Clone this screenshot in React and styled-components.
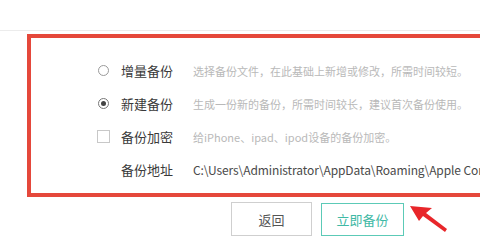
import React from "react";
import styled, { createGlobalStyle } from "styled-components";

const Global = createGlobalStyle`
  html, body { margin: 0; padding: 0; background: #fff; }
  body {
    width: 480px; height: 252px; overflow: hidden;
    font-family: "Noto Sans CJK SC", "Noto Sans", sans-serif;
  }
`;

const Page = styled.div`
  width: 480px;
  height: 252px;
  overflow: hidden;
  display: flex;
  flex-direction: column;
`;

const TopBar = styled.div`
  height: 30px;
  flex: none;
  border-bottom: 1px solid #ececec;
`;

const Highlight = styled.section`
  margin: 3px 0 0 27px;
  width: 480px;
  height: 139px;
  flex: none;
  border: 4px solid #e5483b;
  border-right: none;
  padding-top: 16px;
  box-sizing: content-box;
  overflow: hidden;
`;

const Grid = styled.div`
  display: grid;
  grid-template-columns: 13px 52px auto;
  grid-auto-rows: 33px;
  column-gap: 11px;
  padding-left: 66px;
  align-items: center;
`;

const Control = styled.div`
  display: flex;
  align-items: center;
  justify-content: center;
  height: 33px;
`;

const Radio = styled.span`
  width: 11px;
  height: 11px;
  box-sizing: border-box;
  border-radius: 50%;
  border: 1px solid ${(p) => (p.$checked ? "#777" : "#9a9a9a")};
  display: flex;
  align-items: center;
  justify-content: center;
  &::after {
    content: "";
    display: ${(p) => (p.$checked ? "block" : "none")};
    width: 5px;
    height: 5px;
    border-radius: 50%;
    background: #444;
  }
`;

const Check = styled.span`
  width: 13px;
  height: 13px;
  box-sizing: border-box;
  border: 1px solid #c8c8c8;
`;

const Label = styled.div`
  font-size: 13px;
  color: #3a3a3a;
  white-space: nowrap;
`;

const Desc = styled.div`
  margin-left: 9px;
  font-size: 11px;
  color: #b9b9b9;
  white-space: nowrap;
`;

const Path = styled.div`
  margin-left: 9px;
  font-size: 12px;
  color: #4a4a4a;
  white-space: nowrap;
  letter-spacing: -0.1px;
`;

const Actions = styled.div`
  display: flex;
  align-items: flex-start;
  gap: 9px;
  padding: 5px 0 0 231px;
  position: relative;
`;

const Button = styled.button`
  width: ${(p) => (p.$primary ? "83px" : "81px")};
  height: ${(p) => (p.$primary ? "33px" : "34px")};
  margin-top: ${(p) => (p.$primary ? "1px" : "0")};
  box-sizing: border-box;
  background: #fff;
  border: 1px solid ${(p) => (p.$primary ? "#5ccab7" : "#cfcfcf")};
  color: ${(p) => (p.$primary ? "#3fb9a5" : "#555")};
  font-family: "Noto Sans CJK SC", sans-serif;
  font-size: 13px;
  padding: 0;
`;

const Arrow = styled.svg`
  position: absolute;
  left: 405px;
  top: 7px;
`;

const rows = [
  { control: "radio", label: "增量备份", desc: "选择备份文件，在此基础上新增或修改，所需时间较短。" },
  { control: "radio", checked: true, label: "新建备份", desc: "生成一份新的备份，所需时间较长，建议首次备份使用。" },
  { control: "check", label: "备份加密", desc: "给iPhone、ipad、ipod设备的备份加密。" },
  { control: null, label: "备份地址", path: "C:\\Users\\Administrator\\AppData\\Roaming\\Apple Computer\\MobileSync" },
];

export default function App() {
  return (
    <Page>
      <Global />
      <TopBar />
      <Highlight>
        <Grid>
          {rows.map((r) => (
            <React.Fragment key={r.label}>
              <Control>
                {r.control === "radio" && <Radio $checked={r.checked} />}
                {r.control === "check" && <Check />}
              </Control>
              <Label>{r.label}</Label>
              {r.path ? <Path>{r.path}</Path> : <Desc>{r.desc}</Desc>}
            </React.Fragment>
          ))}
        </Grid>
      </Highlight>
      <Actions>
        <Button>返回</Button>
        <Button $primary>立即备份</Button>
        <Arrow width="45" height="30" viewBox="0 0 45 30">
          <polygon points="5,2 27,4 21,9 42,25 40,28 18,12 14,17" fill="#e8262a" />
        </Arrow>
      </Actions>
    </Page>
  );
}
